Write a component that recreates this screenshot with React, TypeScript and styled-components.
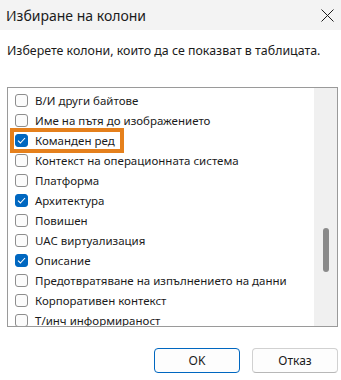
import React from 'react';
import styled, { createGlobalStyle } from 'styled-components';

const GlobalStyle = createGlobalStyle`
  body {
    margin: 0;
    background: #ffffff;
    font-family: "Noto Sans", "Open Sans", sans-serif;
    color: #1b1b1b;
  }
`;

const Window = styled('div')`
  width: 341px;
  height: 380px;
  display: flex;
  flex-direction: column;
  background: #ffffff;
  overflow: hidden;
`;

const TitleBar = styled('div')`
  height: 30px;
  flex-shrink: 0;
  display: flex;
  align-items: center;
  justify-content: space-between;
  padding: 0 7px 0 6px;
  background: #f3f3f3;
  font-size: 14px;
`;

const CloseButton = styled('button')`
  border: none;
  background: none;
  padding: 0;
  width: 13px;
  height: 13px;
  display: flex;
`;

const Body = styled('div')`
  display: flex;
  flex-direction: column;
  padding: 0 3px 0 7px;
`;

const Description = styled('p')`
  margin: 13px 0 0 0;
  font-size: 12.4px;
  line-height: 16px;
`;

const ListBox = styled('div')`
  margin-top: 28px;
  height: 238px;
  width: 329px;
  border: 1px solid #9a9a9a;
  display: flex;
`;

const List = styled('ul')`
  flex: 1;
  margin: 0;
  padding: 2px 0 0 6px;
  list-style: none;
  overflow: hidden;
`;

const Row = styled('li')`
  height: 20px;
  display: flex;
  align-items: center;
`;

const Option = styled('label')<{ $highlight?: boolean }>`
  display: inline-flex;
  align-items: center;
  gap: 7px;
  height: 17px;
  padding: 0 5px 0 1px;
  font-size: 11.5px;
  white-space: nowrap;
  outline: ${(p) => (p.$highlight ? '4px solid #e5801c' : 'none')};
`;

const Box = styled('span')<{ $checked?: boolean }>`
  width: 13px;
  height: 13px;
  box-sizing: border-box;
  border-radius: 3px;
  border: 1px solid ${(p) => (p.$checked ? '#0067c0' : '#8d8d8d')};
  background: ${(p) => (p.$checked ? '#0067c0' : '#fbfbfb')};
  display: flex;
  align-items: center;
  justify-content: center;
  flex-shrink: 0;
`;

const ScrollTrack = styled('div')`
  width: 23px;
  background: #f0f0f0;
  display: flex;
  justify-content: center;
`;

const ScrollThumb = styled('div')`
  margin-top: 140px;
  width: 6px;
  height: 44px;
  border-radius: 3px;
  background: #8a8a8a;
`;

const Footer = styled('div')`
  display: flex;
  justify-content: flex-end;
  gap: 12px;
  margin-top: 21px;
`;

const Button = styled('button')<{ $primary?: boolean }>`
  width: 86px;
  height: 25px;
  border-radius: 4px;
  font-family: "Noto Sans", "Open Sans", sans-serif;
  font-size: 12px;
  color: #1b1b1b;
  background: #fdfdfd;
  border: 1px solid ${(p) => (p.$primary ? '#0067c0' : '#d1d1d1')};
  border-bottom-color: ${(p) => (p.$primary ? '#0067c0' : '#b8b8b8')};
`;

const columns = [
  { label: 'В/И други байтове', checked: false },
  { label: 'Име на пътя до изображението', checked: false },
  { label: 'Команден ред', checked: true, highlight: true },
  { label: 'Контекст на операционната система', checked: false },
  { label: 'Платформа', checked: false },
  { label: 'Архитектура', checked: true },
  { label: 'Повишен', checked: false },
  { label: 'UAC виртуализация', checked: false },
  { label: 'Описание', checked: true },
  { label: 'Предотвратяване на изпълнението на данни', checked: false },
  { label: 'Корпоративен контекст', checked: false },
  { label: 'Т/инч информираност', checked: false },
];

function Check() {
  return (
    <svg width="9" height="7" viewBox="0 0 9 7">
      <path d="M1 3.6 L3.4 6 L8 1" fill="none" stroke="#ffffff" strokeWidth="1.1" />
    </svg>
  );
}

function App() {
  return (
    <Window>
      <GlobalStyle />
      <TitleBar>
        <span>Избиране на колони</span>
        <CloseButton aria-label="Затвори">
          <svg width="13" height="13" viewBox="0 0 13 13">
            <path d="M0.5 0.5 L12.5 12.5 M12.5 0.5 L0.5 12.5" stroke="#1b1b1b" strokeWidth="1" />
          </svg>
        </CloseButton>
      </TitleBar>
      <Body>
        <Description>Изберете колони, които да се показват в таблицата.</Description>
        <ListBox>
          <List>
            {columns.map((c) => (
              <Row key={c.label}>
                <Option $highlight={c.highlight}>
                  <Box $checked={c.checked}>{c.checked && <Check />}</Box>
                  {c.label}
                </Option>
              </Row>
            ))}
          </List>
          <ScrollTrack>
            <ScrollThumb />
          </ScrollTrack>
        </ListBox>
        <Footer>
          <Button $primary>OK</Button>
          <Button>Отказ</Button>
        </Footer>
      </Body>
    </Window>
  );
}

export default App;
